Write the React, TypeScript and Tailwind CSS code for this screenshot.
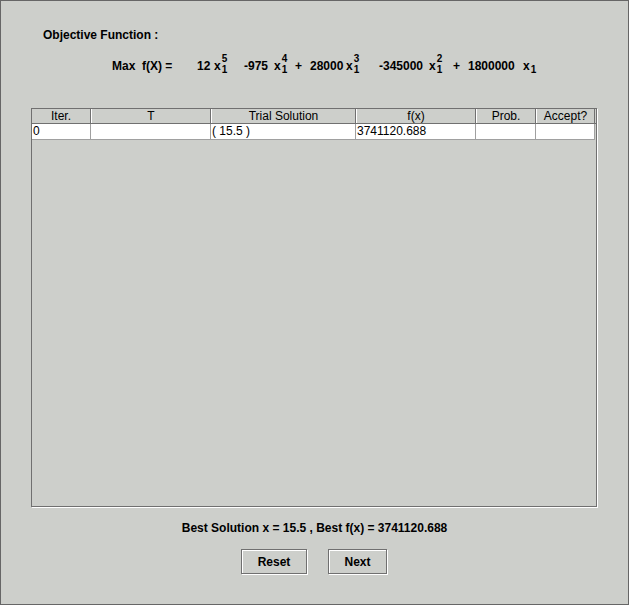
import React from 'react';

const X = ({ sup, className }: { sup?: string; className: string }) => (
    <span className={`flex items-center shrink-0 ${className}`}>
        <span>x</span>
        <span className="flex flex-col ml-px mb-[4px] text-[10px] leading-[11px]">
            <span className="h-[11px]">{sup}</span>
            <span>1</span>
        </span>
    </span>
)

const cols = [
    { name: 'Iter.', w: 'w-[59px]' },
    { name: 'T', w: 'w-[120px]' },
    { name: 'Trial Solution', w: 'w-[145px]' },
    { name: 'f(x)', w: 'w-[120px]' },
    { name: 'Prob.', w: 'w-[60px]' },
    { name: 'Accept?', w: 'w-[59px]' },
]

const row = ['0', '', '( 15.5 )', '3741120.688', '', '']

const App = () => {

    return (
        <div className="w-[629px] h-[605px] border border-[#666666] bg-[#cdcfcb] text-black font-['Liberation_Sans',Arial,sans-serif] text-[12px] leading-[14px] flex flex-col">

            <div className="pt-[27px] pl-[42px] font-bold">Objective Function :</div>

            <div className="flex items-center h-[22px] mt-[13px] pl-[111px] font-bold whitespace-pre">
                <span className="w-[85px] shrink-0">Max  f(X) =</span>
                <span className="w-[17px] shrink-0">12</span>
                <X sup="5" className="w-[30px]" />
                <span className="w-[30px] shrink-0">-975</span>
                <X sup="4" className="w-[21px]" />
                <span className="w-[15px] shrink-0">+</span>
                <span className="w-[36px] shrink-0">28000</span>
                <X sup="3" className="w-[33px]" />
                <span className="w-[50px] shrink-0">-345000</span>
                <X sup="2" className="w-[24px]" />
                <span className="w-[15px] shrink-0">+</span>
                <span className="w-[55px] shrink-0">1800000</span>
                <X className="w-[20px]" />
            </div>

            {/* table pane */}
            <div className="ml-[30px] mt-[31px] w-[566px] h-[399px] border border-[#707070] shadow-[1px_1px_0_#ffffff] flex flex-col">
                <div className="flex h-[15px] border-b border-[#707070]">
                    {cols.map((c, i) => (
                        <div key={i} className={`${c.w} shrink-0 border-r border-[#707070] ${i > 0 ? 'border-l border-l-white' : ''} text-center leading-[14px]`}>
                            {c.name}
                        </div>
                    ))}
                </div>
                <div className="flex h-[16px]">
                    {row.map((v, i) => (
                        <div key={i} className={`${cols[i].w} shrink-0 bg-white border-r border-b border-[#a0a0a0] pl-[1px] leading-[15px] whitespace-pre`}>
                            {v}
                        </div>
                    ))}
                </div>
            </div>

            <div className="mt-[14px] text-center font-bold">Best Solution x = 15.5 , Best f(x) = 3741120.688</div>

            <div className="mt-[14px] flex justify-center gap-[21px] pr-px">
                <button className="w-[66px] h-[25px] border border-[#707070] shadow-[inset_1px_1px_0_#ffffff,1px_1px_0_#ffffff] font-bold">Reset</button>
                <button className="w-[59px] h-[25px] border border-[#707070] shadow-[inset_1px_1px_0_#ffffff,1px_1px_0_#ffffff] font-bold">Next</button>
            </div>

        </div>
    )
}

export default App
